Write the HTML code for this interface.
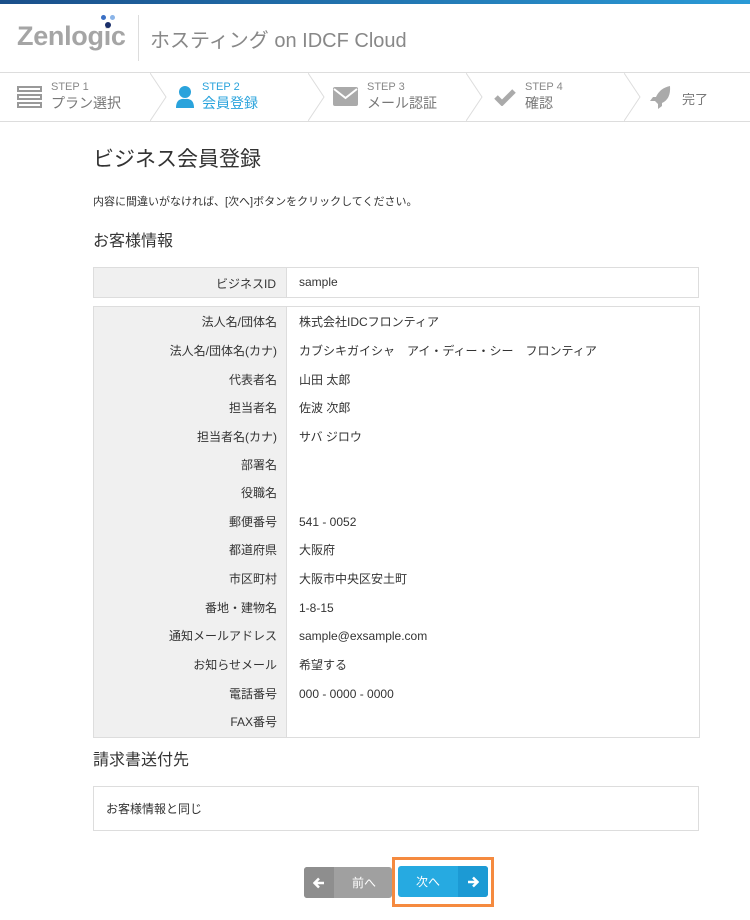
<!DOCTYPE html>
<html><head><meta charset="utf-8"><style>
*{margin:0;padding:0;box-sizing:border-box}
body{width:750px;height:920px;background:#fff;font-family:"Liberation Sans","Noto Sans CJK JP",sans-serif;color:#333;position:relative;overflow:hidden}
.topbar{position:absolute;top:0;left:0;width:750px;height:4px;background:linear-gradient(90deg,#1a4f8a,#2a9ad6)}
.abs{position:absolute}
.steps{position:absolute;top:72px;left:0;width:750px;height:50px;border-top:1px solid #ddd;border-bottom:1px solid #ddd}
.st{position:absolute;top:8px;font-size:11px;color:#888;line-height:13px}
.st b{display:block;font-weight:normal;font-size:14px;color:#777;line-height:18px}
.chev{position:absolute;top:0;width:20px;height:48px}
.rows .r{position:absolute;left:0;width:606px;height:29px;font-size:12px;line-height:29px}
.rows .l{position:absolute;right:423px;text-align:right;white-space:nowrap}
.rows .v{position:absolute;left:205px;white-space:nowrap}
</style></head><body>
<div class="topbar"></div>
<div class="abs" style="left:17px;top:21px;font-size:27px;font-weight:bold;color:#a5a5a5;letter-spacing:-0.3px;">Zenlogic</div>
<div class="abs" style="left:101px;top:15px;width:5px;height:5px;border-radius:50%;background:#3a6fc4"></div>
<div class="abs" style="left:110px;top:15px;width:5px;height:5px;border-radius:50%;background:#8ab4e8"></div>
<div class="abs" style="left:105px;top:22px;width:6px;height:6px;border-radius:50%;background:#1a2f6a"></div>
<div class="abs" style="left:138px;top:15px;width:1px;height:46px;background:#ddd"></div>
<div class="abs" style="left:150px;top:24px;font-size:20px;color:#888">ホスティング on IDCF Cloud</div>

<div class="steps">
<svg class="abs" style="left:17px;top:13px" width="25" height="22"><g fill="#999"><rect x="0" y="0" width="25" height="6"/><rect x="0" y="8" width="25" height="6"/><rect x="0" y="16" width="25" height="6"/></g><g fill="#fff"><rect x="2" y="2" width="21" height="2"/><rect x="2" y="10" width="21" height="2"/><rect x="2" y="18" width="21" height="2"/></g></svg>
<div class="st" style="left:51px">STEP 1<b>プラン選択</b></div>
<svg class="chev" style="left:150px"><path d="M0 0 L16 24 L0 48" fill="none" stroke="#ddd"/></svg>
<svg class="abs" style="left:176px;top:13px" width="18" height="22"><circle cx="9" cy="6" r="6" fill="#2aa3dc"/><path d="M0 22 Q0 12 9 13 Q18 12 18 22 Z" fill="#2aa3dc"/></svg>
<div class="st" style="left:202px;color:#2aa3dc">STEP 2<b style="color:#2aa3dc">会員登録</b></div>
<svg class="chev" style="left:308px"><path d="M0 0 L16 24 L0 48" fill="none" stroke="#ddd"/></svg>
<svg class="abs" style="left:333px;top:14px" width="25" height="19"><rect width="25" height="19" rx="2" fill="#aaa"/><path d="M1 2 L12.5 11 L24 2" fill="none" stroke="#fff" stroke-width="2"/></svg>
<div class="st" style="left:367px">STEP 3<b>メール認証</b></div>
<svg class="chev" style="left:466px"><path d="M0 0 L16 24 L0 48" fill="none" stroke="#ddd"/></svg>
<svg class="abs" style="left:494px;top:15px" width="22" height="18"><path d="M2 9 L8 15 L20 3" fill="none" stroke="#aaa" stroke-width="5"/></svg>
<div class="st" style="left:525px">STEP 4<b>確認</b></div>
<svg class="chev" style="left:624px"><path d="M0 0 L16 24 L0 48" fill="none" stroke="#ddd"/></svg>
<svg class="abs" style="left:650px;top:12px" width="22" height="24"><path d="M20 1 Q10 3 6 12 L3 12 L0 16 L5 16 L8 19 L8 24 L12 21 L12 18 Q21 14 20 1Z" fill="#aaa"/></svg>
<div class="abs" style="left:682px;top:16px;font-size:13px;color:#777">完了</div>
</div>

<div class="abs" style="left:93px;top:143px;font-size:21px;color:#333">ビジネス会員登録</div>
<div class="abs" style="left:93px;top:193px;font-size:11px;color:#333">内容に間違いがなければ、[次へ]ボタンをクリックしてください。</div>
<div class="abs" style="left:93px;top:227px;font-size:16px;color:#333">お客様情報</div>

<div class="abs" style="left:93px;top:267px;width:606px;height:31px;border:1px solid #ddd">
<div class="abs" style="left:0;top:0;width:193px;height:29px;background:#f0f0f0;border-right:1px solid #ddd"></div>
<div class="abs" style="right:422px;top:7px;font-size:12px">ビジネスID</div>
<div class="abs" style="left:205px;top:7px;font-size:12px">sample</div>
</div>

<div class="abs rows" style="left:93px;top:306px;width:607px;height:432px;border:1px solid #ddd">
<div class="abs" style="left:0;top:0;width:193px;height:430px;background:#f0f0f0;border-right:1px solid #ddd"></div>
<div class="r" style="top:1px"><span class="l">法人名/団体名</span><span class="v">株式会社IDCフロンティア</span></div>
<div class="r" style="top:30px"><span class="l">法人名/団体名(カナ)</span><span class="v">カブシキガイシャ　アイ・ディー・シー　フロンティア</span></div>
<div class="r" style="top:59px"><span class="l">代表者名</span><span class="v">山田 太郎</span></div>
<div class="r" style="top:87px"><span class="l">担当者名</span><span class="v">佐波 次郎</span></div>
<div class="r" style="top:116px"><span class="l">担当者名(カナ)</span><span class="v">サバ ジロウ</span></div>
<div class="r" style="top:144px"><span class="l">部署名</span></div>
<div class="r" style="top:172px"><span class="l">役職名</span></div>
<div class="r" style="top:201px"><span class="l">郵便番号</span><span class="v">541 - 0052</span></div>
<div class="r" style="top:229px"><span class="l">都道府県</span><span class="v">大阪府</span></div>
<div class="r" style="top:258px"><span class="l">市区町村</span><span class="v">大阪市中央区安土町</span></div>
<div class="r" style="top:287px"><span class="l">番地・建物名</span><span class="v">1-8-15</span></div>
<div class="r" style="top:315px"><span class="l">通知メールアドレス</span><span class="v">sample@exsample.com</span></div>
<div class="r" style="top:344px"><span class="l">お知らせメール</span><span class="v">希望する</span></div>
<div class="r" style="top:373px"><span class="l">電話番号</span><span class="v">000 - 0000 - 0000</span></div>
<div class="r" style="top:401px"><span class="l">FAX番号</span></div>
</div>

<div class="abs" style="left:93px;top:746px;font-size:16px">請求書送付先</div>
<div class="abs" style="left:93px;top:786px;width:606px;height:45px;border:1px solid #ddd;font-size:12px;padding:13px 0 0 12px">お客様情報と同じ</div>

<div class="abs" style="left:304px;top:867px;width:88px;height:31px;border-radius:3px;background:#a0a0a0;overflow:hidden">
<div class="abs" style="left:0;top:0;width:30px;height:31px;background:#8e8e8e"></div>
<svg class="abs" style="left:9px;top:10px" width="12" height="12"><path d="M11 6 L2 6 M6 1.5 L1.5 6 L6 10.5" fill="none" stroke="#fff" stroke-width="2.5"/></svg>
<div class="abs" style="left:48px;top:7px;font-size:12px;color:#fff">前へ</div>
</div>
<div class="abs" style="left:392px;top:857px;width:102px;height:50px;border:3px solid #f58a3f"></div>
<div class="abs" style="left:398px;top:866px;width:90px;height:31px;border-radius:3px;background:#26aae1;overflow:hidden">
<div class="abs" style="right:0;top:0;width:30px;height:31px;background:#1c9ad4"></div>
<svg class="abs" style="left:69px;top:10px" width="12" height="12"><path d="M1 6 L10 6 M6 1.5 L10.5 6 L6 10.5" fill="none" stroke="#fff" stroke-width="2.5"/></svg>
<div class="abs" style="left:18px;top:7px;font-size:12px;color:#fff">次へ</div>
</div>
</body></html>
